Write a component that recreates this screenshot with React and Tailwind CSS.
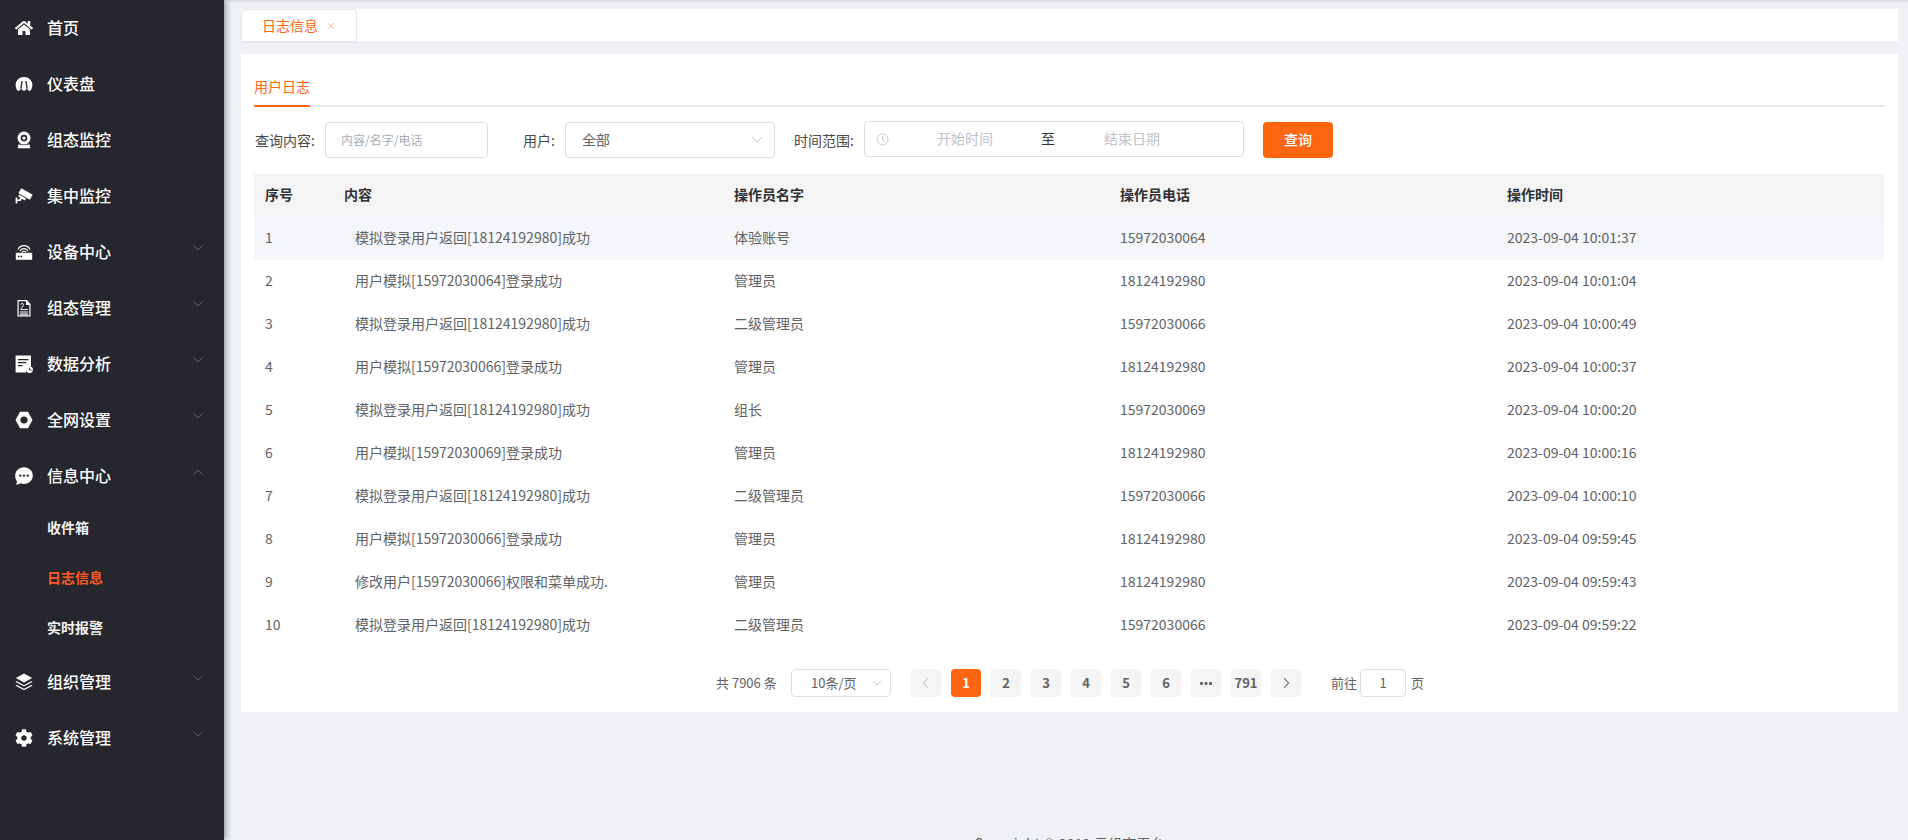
import React from 'react';
import { X } from 'lucide-react';
import { FaCog, FaHome } from 'react-icons/fa';

const Chevron = ({ up }) => (
  <svg viewBox="0 0 10 6" className="w-[10px] h-[6px] mb-[8px]" fill="none" stroke="#5d606b" strokeWidth="1">
    <path d={up ? 'M0.5 5.5L5 1l4.500 4.500' : 'M0.5 0.5L5 5l4.500-4.500'} />
  </svg>
);

const icons = {
  gauge: (
    <>
      <path d="M9 2C4.500 2 .6 5.400.6 10.100c0 2.600.9 4.500 2.200 5.700.4.300 1 .3 1.300 0l2-2c.3.700 1.600 2 2.900 2s2.600-1.300 2.900-2l2 2c.3.3.9.3 1.300 0 1.300-1.200 2.200-3.100 2.200-5.700C17.400 5.400 13.500 2 9 2z" fill="#fff" />
      <path d="M6.400 6l-1.200 7.600 1.300.5L7.700 6zM11.600 6l1.200 7.600-1.300.5L10.300 6z" fill="#26262e" />
    </>
  ),
  webcam: (
    <>
      <path fillRule="evenodd" d="M9 .6a6.500 6.500 0 1 1 0 13A6.500 6.500 0 0 1 9 .6zm0 3.200a3.300 3.300 0 1 0 0 6.600 3.300 3.300 0 0 0 0-6.600z" fill="#fff" />
      <circle cx="9" cy="7.100" r="1.600" fill="#fff" />
      <path d="M3.600 13.300c3.300 1.400 7.500 1.400 10.800 0l.7 2.200v1.800H2.900v-1.800z" fill="#fff" />
    </>
  ),
  cctv: (
    <>
      <path d="M6.300 1.200l11.400 6.600-2.900 5L3.400 6.200z" fill="#fff" />
      <path d="M4 7.500l7 4-1.100 1.900-2.900-1.700-1.300 2.300H2.300v2.600H.6v-6.200h1.700v2h1.900l1.100-1.900-1.900-1.100z" fill="#fff" />
    </>
  ),
  router: (
    <>
      <path d="M.8 9.800h16.400v7H.8z" fill="#fff" />
      <path d="M2.800 12.800h1.700v1.500H2.800zM5.500 12.800h1.700v1.500H5.500z" fill="#26262e" />
      <path d="M5 8.200a4.400 4.400 0 0 1 8 0M3 6.500a6.600 6.600 0 0 1 12 0M7 9.500a2.200 2.200 0 0 1 4 0" fill="none" stroke="#fff" strokeWidth="1.200" />
    </>
  ),
  doc: (
    <>
      <path d="M2.500 1h9.500L15.500 5v12.400h-13z" fill="#fff" />
      <path d="M3.700 2.200h7.300v3.800h3.300v10.200H3.700z" fill="#26262e" />
      <path d="M5 12.500h8v1.100H5zM5 14.600h8v1.100H5z" fill="#fff" />
      <path d="M5.500 10.500c.5-1 3-3.500 3-4.800a1.300 1.300 0 0 0-2.600 0M6 10.500h7" fill="none" stroke="#fff" strokeWidth="1" />
    </>
  ),
  report: (
    <>
      <path d="M.6.600h15.400v11.400a5.200 5.200 0 0 0-4.800 5.400H.6z" fill="#fff" />
      <path d="M3 4h10.400v1.300H3zM3 7h8v1.300H3zM3 10h4.500v1.300H3z" fill="#26262e" />
      <circle cx="14.600" cy="14.800" r="3.300" fill="#fff" />
      <path d="M14.600 12.900v2.200h1.900" fill="none" stroke="#26262e" strokeWidth=".9" />
    </>
  ),
  hex: (
    <path
      fillRule="evenodd"
      d="M5 .8h8l4.500 8.200L13 17.200H5L.5 9zM9 5.400a3.600 3.600 0 1 0 0 7.200 3.600 3.600 0 0 0 0-7.200z"
      fill="#fff"
    />
  ),
  chat: (
    <>
      <path d="M9 .3c5 0 8.800 3.600 8.800 8.300s-3.800 8.300-8.800 8.300c-1.200 0-2.300-.2-3.400-.6-1.400.8-3.100 1.300-4.900 1.200.8-.8 1.300-1.900 1.400-3.100C.8 13.100.2 11 .2 8.600.2 3.900 4 .3 9 .3z" fill="#fff" />
      <circle cx="5.200" cy="8.600" r="1.200" fill="#26262e" />
      <circle cx="9" cy="8.600" r="1.200" fill="#26262e" />
      <circle cx="12.800" cy="8.600" r="1.200" fill="#26262e" />
    </>
  ),
  layers: (
    <>
      <path d="M9 .6l8.200 4.400L9 9.400.8 5z" fill="#fff" />
      <path d="M1 8.500L9 12.800l8-4.300M1 12.200L9 16.500l8-4.300" fill="none" stroke="#fff" strokeWidth="1.300" />
    </>
  ),
};

const menu = [
  { label: '首页', icon: 'home' },
  { label: '仪表盘', icon: 'gauge' },
  { label: '组态监控', icon: 'webcam' },
  { label: '集中监控', icon: 'cctv' },
  { label: '设备中心', icon: 'router', arrow: true },
  { label: '组态管理', icon: 'doc', arrow: true },
  { label: '数据分析', icon: 'report', arrow: true },
  { label: '全网设置', icon: 'hex', arrow: true },
  { label: '信息中心', icon: 'chat', arrow: true, open: true, children: ['收件箱', '日志信息', '实时报警'] },
  { label: '组织管理', icon: 'layers', arrow: true },
  { label: '系统管理', icon: 'gear', arrow: true },
];

const rows = [
  ['1', '模拟登录用户返回[18124192980]成功', '体验账号', '15972030064', '2023-09-04 10:01:37'],
  ['2', '用户模拟[15972030064]登录成功', '管理员', '18124192980', '2023-09-04 10:01:04'],
  ['3', '模拟登录用户返回[18124192980]成功', '二级管理员', '15972030066', '2023-09-04 10:00:49'],
  ['4', '用户模拟[15972030066]登录成功', '管理员', '18124192980', '2023-09-04 10:00:37'],
  ['5', '模拟登录用户返回[18124192980]成功', '组长', '15972030069', '2023-09-04 10:00:20'],
  ['6', '用户模拟[15972030069]登录成功', '管理员', '18124192980', '2023-09-04 10:00:16'],
  ['7', '模拟登录用户返回[18124192980]成功', '二级管理员', '15972030066', '2023-09-04 10:00:10'],
  ['8', '用户模拟[15972030066]登录成功', '管理员', '18124192980', '2023-09-04 09:59:45'],
  ['9', '修改用户[15972030066]权限和菜单成功.', '管理员', '18124192980', '2023-09-04 09:59:43'],
  ['10', '模拟登录用户返回[18124192980]成功', '二级管理员', '15972030066', '2023-09-04 09:59:22'],
];

function MenuIcon({ name }) {
  if (name === 'home') return <FaHome className="h-[18px] w-[18px] shrink-0 text-white" />;
  if (name === 'gear') return <FaCog className="h-[18px] w-[18px] shrink-0 text-white" />;
  return (
    <svg viewBox="0 0 18 18" className="h-[18px] w-[18px] shrink-0">
      {icons[name]}
    </svg>
  );
}

function Sidebar() {
  return (
    <aside className="relative z-10 w-[224px] shrink-0 bg-[#26262e] shadow-[2px_0_6px_rgba(0,21,41,0.4)]">
      {menu.map((item) => (
        <div key={item.label}>
          <div className="flex h-[56px] items-center pl-[15px] pr-[21px] text-[16px] font-medium text-white">
            <MenuIcon name={item.icon} />
            <span className="mb-[2px] ml-[14px] flex-1">{item.label}</span>
            {item.arrow && <Chevron up={item.open} />}
          </div>
          {item.children?.map((child) => (
            <div
              key={child}
              className={`flex h-[50px] items-center pb-[4px] pl-[47px] text-[14px] font-bold ${
                child === '日志信息' ? 'text-[#ff5a1f]' : 'text-[#f2f2f2]'
              }`}
            >
              {child}
            </div>
          ))}
        </div>
      ))}
    </aside>
  );
}

function Filters() {
  return (
    <div className="mt-[15px] flex h-[36px] items-center text-[14px] text-[#4a4a4a]">
      <label className="w-[71px] pl-px">查询内容:</label>
      <div className="flex h-[36px] w-[163px] items-center rounded border border-[#dcdfe6] pb-px pl-[15px] text-[12px] text-[#a8abb2]">
        内容/名字/电话
      </div>
      <label className="ml-[35px] w-[42px]">用户:</label>
      <div className="flex h-[36px] w-[210px] items-center justify-between rounded border border-[#dcdfe6] pb-[2px] pl-[16px] pr-[11px] text-[#606266]">
        全部
        <svg viewBox="0 0 12 7" className="h-[7px] w-[12px]" fill="none" stroke="#c0c4cc" strokeWidth="1">
          <path d="M1 1l5 5 5-5" />
        </svg>
      </div>
      <label className="ml-[19px] w-[70px]">时间范围:</label>
      <div className="-mt-[2px] flex h-[36px] w-[380px] items-center rounded border border-[#dcdfe6] pb-[2px] pl-[11px] text-[#c0c4cc]">
        <svg viewBox="0 0 14 14" className="mt-[2px] h-[13px] w-[13px]" fill="none" stroke="#c0c4cc" strokeWidth="1">
          <circle cx="7" cy="7" r="6" />
          <path d="M7 3.500V7.500L9.500 9.500" />
        </svg>
        <span className="w-[152px] text-center">开始时间</span>
        <span className="w-[14px] text-center text-[#303133]">至</span>
        <span className="w-[154px] text-center">结束日期</span>
      </div>
      <button className="ml-[19px] h-[36px] w-[70px] rounded bg-[#ff6612] pb-[2px] font-medium text-white">查询</button>
    </div>
  );
}

function LogTable() {
  return (
    <table className="mt-[16px] w-[1630px] table-fixed border-collapse text-[14px]">
      <colgroup>
        <col className="w-[79px]" />
        <col className="w-[390px]" />
        <col className="w-[386px]" />
        <col className="w-[387px]" />
        <col className="w-[388px]" />
      </colgroup>
      <thead>
        <tr className="h-[43px] bg-[#f4f4f4] text-left text-[#303133]">
          {['序号', '内容', '操作员名字', '操作员电话', '操作时间'].map((h) => (
            <th key={h} className="pb-[2px] pl-[11px] font-bold">
              {h}
            </th>
          ))}
        </tr>
      </thead>
      <tbody>
        {rows.map((row, i) => (
          <tr key={row[0]} className={`h-[43px] text-[#606266] ${i === 0 ? 'bg-[#f4f6fa]' : ''}`}>
            <td className="pb-[2px] pl-[11px]">{row[0]}</td>
            <td className="pb-[2px] pl-[22px]">{row[1]}</td>
            <td className="pb-[2px] pl-[11px]">{row[2]}</td>
            <td className="pb-[2px] pl-[11px]">{row[3]}</td>
            <td className="pb-[2px] pl-[11px]">{row[4]}</td>
          </tr>
        ))}
      </tbody>
    </table>
  );
}

function PageButton({ children, active, muted }) {
  return (
    <div
      className={`flex h-[28px] w-[30px] items-center justify-center rounded-sm text-[13px] font-bold ${
        active ? 'bg-[#ff6612] text-white' : muted ? 'bg-[#f4f4f5] text-[#c0c4cc]' : 'bg-[#f4f4f5] text-[#606266]'
      }`}
    >
      {children}
    </div>
  );
}

const Arrow = ({ d }) => (
  <svg viewBox="0 0 8 12" className="h-[12px] w-[8px]" fill="none" stroke="currentColor" strokeWidth="1.100">
    <path d={d} />
  </svg>
);

function Pagination() {
  return (
    <div className="mt-[22px] flex h-[28px] items-center pl-[462px] text-[13px] text-[#606266]">
      <span className="w-[61px] whitespace-nowrap">共 7906 条</span>
      <div className="ml-[14px] flex h-[28px] w-[100px] items-center justify-between rounded border border-[#dcdfe6] pl-[19px] pr-[8px]">
        10条/页
        <svg viewBox="0 0 10 6" className="h-[6px] w-[10px]" fill="none" stroke="#c0c4cc" strokeWidth="1">
          <path d="M1 1l4 4 4-4" />
        </svg>
      </div>
      <div className="ml-[20px] flex gap-[10px]">
        <PageButton muted>
          <Arrow d="M6 1L1.500 6 6 11" />
        </PageButton>
        <PageButton active>1</PageButton>
        <PageButton>2</PageButton>
        <PageButton>3</PageButton>
        <PageButton>4</PageButton>
        <PageButton>5</PageButton>
        <PageButton>6</PageButton>
        <PageButton>
          <svg viewBox="0 0 12 3" className="h-[3px] w-[12px]" fill="currentColor">
            <rect x="0" y="0" width="3" height="3" rx="1" />
            <rect x="4.500" y="0" width="3" height="3" rx="1" />
            <rect x="9" y="0" width="3" height="3" rx="1" />
          </svg>
        </PageButton>
        <PageButton>791</PageButton>
        <PageButton>
          <Arrow d="M2 1l4.500 5L2 11" />
        </PageButton>
      </div>
      <span className="ml-[30px] w-[25px] whitespace-nowrap">前往</span>
      <div className="ml-[4px] flex h-[28px] w-[46px] items-center justify-center rounded border border-[#dcdfe6]">1</div>
      <span className="ml-[5px] w-[13px]">页</span>
    </div>
  );
}

export default function App() {
  return (
    <div className="flex h-[840px] w-[1908px] overflow-hidden bg-[#f0f1f5] font-['Noto_Sans_CJK_SC',sans-serif]">
      <Sidebar />
      <main className="flex min-w-0 flex-1 flex-col pl-[17px] pr-[10px] pt-[9px] shadow-[inset_0_3px_3px_-2px_rgba(0,0,0,0.12)]">
        <div className="h-[34px] shrink-0 border-b border-[#e4e7ed] bg-white">
          <div className="flex h-[33px] w-[116px] items-center rounded-t border border-[#e4e7ed] pl-[20px] text-[14px] text-[#ff6612]">
            日志信息
            <X className="ml-[8px] h-[10px] w-[10px] text-[#ff8a50]" strokeWidth={1.5} />
          </div>
        </div>
        <section className="mt-[11px] h-[658px] shrink-0 bg-white px-[13px] pt-[11px]">
          <div className="h-[42px] border-b-2 border-[#e4e7ed]">
            <div className="h-[42px] w-[56px] border-b-2 border-[#ff6612] text-[14px] leading-[42px] text-[#ff6612]">
              用户日志
            </div>
          </div>
          <Filters />
          <LogTable />
          <Pagination />
        </section>
        <footer className="mt-[121px] shrink-0 text-center text-[14px] tracking-[0.2px] text-[#606266]">
          Copyright © 2019 云组态平台
        </footer>
      </main>
    </div>
  );
}
